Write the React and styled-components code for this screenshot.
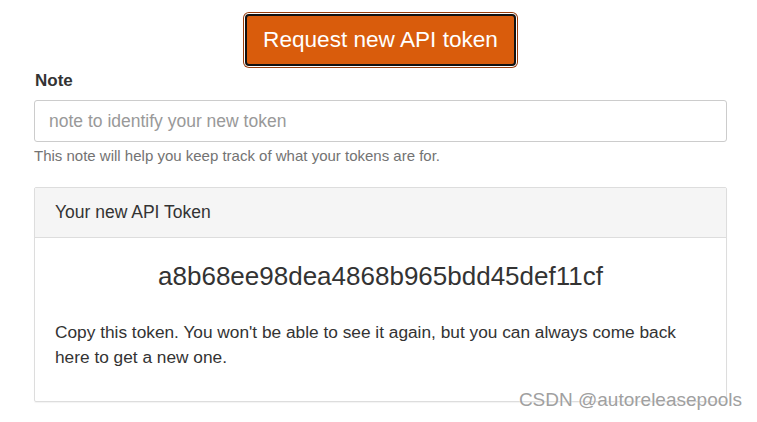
import styled, { createGlobalStyle } from "styled-components";

const GlobalStyle = createGlobalStyle`
  body {
    margin: 0;
    background: #fff;
    font-family: "Liberation Sans", Arial, sans-serif;
    color: #333;
  }
`;

const Page = styled.div`
  position: relative;
  width: 757px;
  height: 422px;
  overflow: hidden;
`;

const Content = styled.div`
  width: 693px;
  margin-left: 34px;
  padding-top: 14px;
  display: flex;
  flex-direction: column;
`;

const RequestButton = styled.button`
  align-self: center;
  width: 271px;
  height: 52px;
  border: 2px solid #111;
  border-radius: 4px;
  box-shadow: 0 0 0 1px #fff, 0 0 0 2px #9a3d0c;
  background: #d95c0c;
  color: #fff;
  font-family: "Liberation Sans", Arial, sans-serif;
  font-size: 22.6px;
  padding: 0;
  cursor: pointer;
`;

const Label = styled.label`
  margin-top: 4px;
  padding-left: 1px;
  font-weight: bold;
  font-size: 17px;
  line-height: 22px;
  color: #333;
`;

const Input = styled.input`
  margin-top: 8px;
  box-sizing: border-box;
  height: 42px;
  border: 1px solid #ccc;
  border-radius: 3px;
  padding: 0 14px;
  font-family: "Liberation Sans", Arial, sans-serif;
  font-size: 17.5px;
  color: #555;
  &::placeholder {
    color: #999;
  }
`;

const Help = styled.p`
  margin: 4px 0 0;
  font-size: 15px;
  line-height: 20px;
  color: #737373;
`;

const Panel = styled.section`
  margin-top: 21px;
  border: 1px solid #ddd;
  border-radius: 2px;
  box-shadow: 0 1px 1px rgba(0, 0, 0, 0.05);
`;

const PanelHeader = styled.div`
  height: 50px;
  box-sizing: border-box;
  display: flex;
  align-items: center;
  padding: 0 20px;
  background: #f5f5f5;
  border-bottom: 1px solid #ddd;
  font-size: 17.5px;
  color: #333;
`;

const PanelBody = styled.div`
  padding: 22px 20px 31px;
`;

const Token = styled.div`
  text-align: center;
  font-size: 26px;
  line-height: 32px;
  color: #333;
`;

const Note = styled.p`
  margin: 28px 0 0;
  font-size: 17.3px;
  line-height: 25px;
  color: #333;
`;

const Watermark = styled.div`
  position: absolute;
  right: 15px;
  top: 389px;
  font-size: 19px;
  color: #a0a0a0;
  text-shadow: 0 0 2px #fff;
`;

export default function App() {
  return (
    <Page>
      <GlobalStyle />
      <Content>
        <RequestButton>Request new API token</RequestButton>
        <Label>Note</Label>
        <Input placeholder="note to identify your new token" />
        <Help>This note will help you keep track of what your tokens are for.</Help>
        <Panel>
          <PanelHeader>Your new API Token</PanelHeader>
          <PanelBody>
            <Token>a8b68ee98dea4868b965bdd45def11cf</Token>
            <Note>
              Copy this token. You won't be able to see it again, but you can
              always come back here to get a new one.
            </Note>
          </PanelBody>
        </Panel>
      </Content>
      <Watermark>CSDN @autoreleasepools</Watermark>
    </Page>
  );
}
